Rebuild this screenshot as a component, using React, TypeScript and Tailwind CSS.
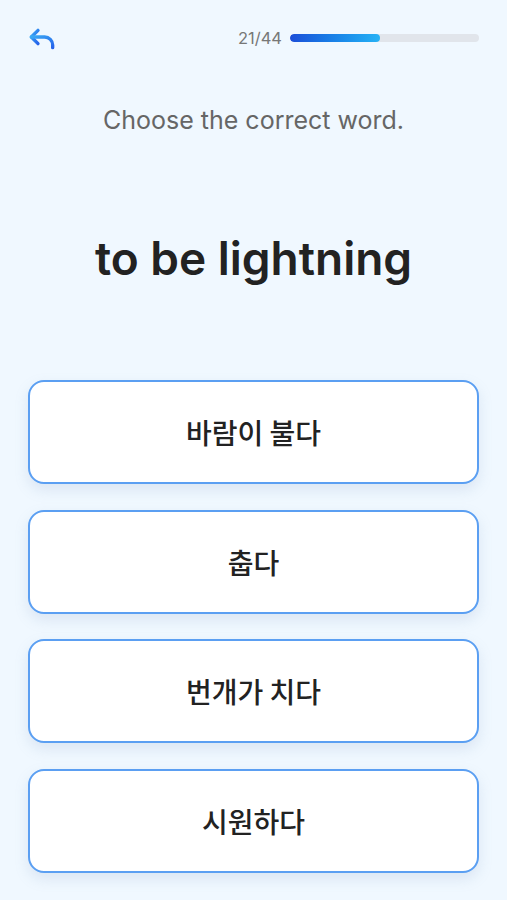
const options = ['바람이 불다', '춥다', '번개가 치다', '시원하다'];

export default function App() {
    const done = 21;
    const total = 44;
    return (
        <div
            className="min-h-screen w-full bg-[#f0f8ff] px-7"
            style={{ fontFamily: 'Inter, "Noto Sans CJK KR", sans-serif' }}
        >
            {/* Header */}
            <header className="flex h-[76px] items-center justify-between">
                <svg width="32" height="32" viewBox="0 0 24 24" fill="none" className="-ml-0.5 -mt-0.5">
                    <defs>
                        <linearGradient id="rg" x1="0" y1="0" x2="1" y2="1">
                            <stop offset="0%" stopColor="#3aa8f4" />
                            <stop offset="100%" stopColor="#2563eb" />
                        </linearGradient>
                    </defs>
                    <path d="M9 17 4 12l5-5" stroke="url(#rg)" strokeWidth="2.5" strokeLinecap="round" strokeLinejoin="round" />
                    <path d="M20 20v-2a6 6 0 0 0-6-6H4" stroke="url(#rg)" strokeWidth="2.5" strokeLinecap="round" strokeLinejoin="round" />
                </svg>
                <div className="flex items-center gap-2">
                    <span className="text-[16.5px] text-[#777]">
                        {done}/{total}
                    </span>
                    <div className="h-2 w-[189px] overflow-hidden rounded-full bg-[#e1e5eb]">
                        <div
                            className="h-full rounded-full bg-gradient-to-r from-[#1d4ed8] to-[#27b2f5]"
                            style={{ width: `${(done / total) * 100}%` }}
                        />
                    </div>
                </div>
            </header>

            {/* Prompt */}
            <p className="mt-7 text-center text-[25px] leading-8 text-[#666]">Choose the correct word.</p>
            <h1 className="mt-[94px] text-center text-[46px] font-semibold leading-[56px] text-[#222]">
                to be lightning
            </h1>

            {/* Options */}
            <div className="mt-[94px] flex flex-col gap-[25.5px]">
                {options.map((o) => (
                    <button
                        key={o}
                        className="flex h-[104px] w-full items-center justify-center rounded-2xl border-2 border-[#5b9ff2] bg-white text-[28px] font-medium text-[#222] shadow-[0_6px_14px_rgba(120,150,190,0.18)]"
                        style={{ fontFamily: '"Noto Sans CJK KR", sans-serif' }}
                    >
                        {o}
                    </button>
                ))}
            </div>
        </div>
    );
}
